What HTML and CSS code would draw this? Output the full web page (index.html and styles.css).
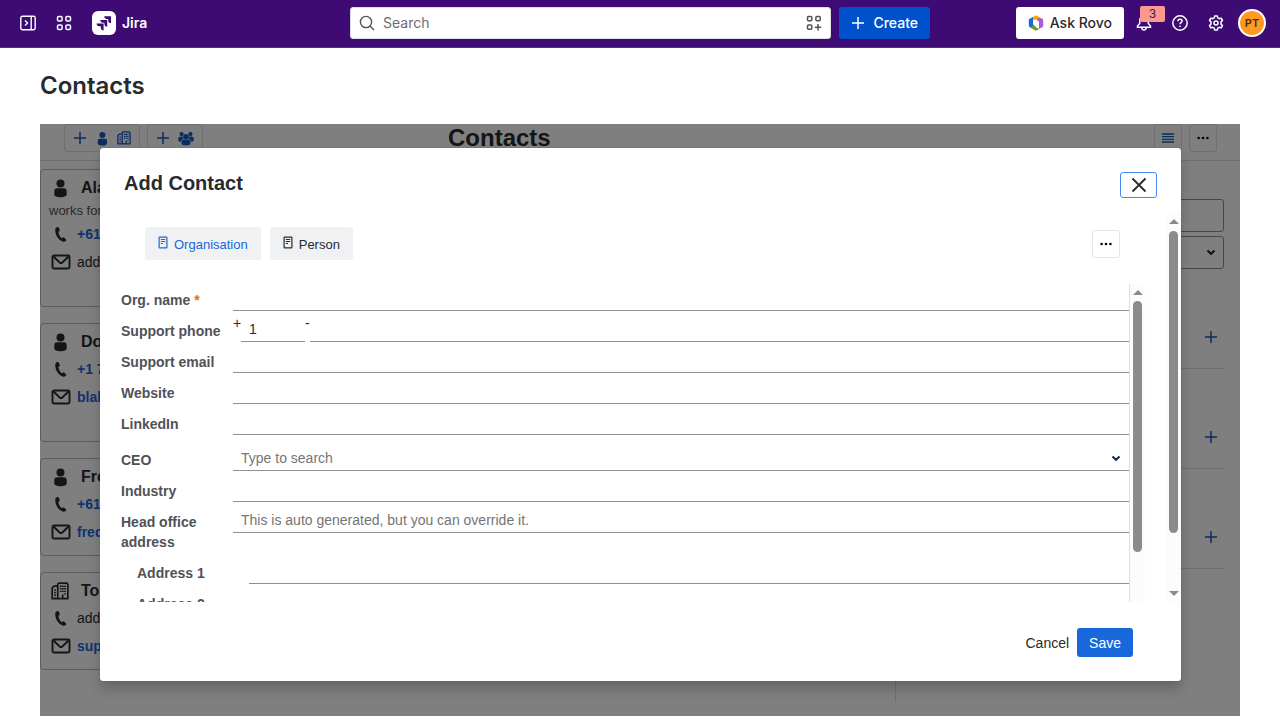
FILE: index.html
```html
<!DOCTYPE html>
<html lang="en">
<head>
<meta charset="utf-8">
<title>Contacts - Jira</title>
<link rel="stylesheet" href="styles.css">
</head>
<body>
<svg class="sprite" aria-hidden="true">
  <symbol id="plus" viewBox="0 0 14 14"><path d="M7 1v12M1 7h12" fill="none" stroke="currentColor" stroke-width="1.5"/></symbol>
  <symbol id="person" viewBox="0 0 18 20"><circle cx="9.500" cy="5.400" r="4"/><path d="M3.300 13.300C3.300 11.200 4.400 10.200 6 10.200h7c1.600 0 2.700 1 2.700 3.100v3.200c0 1.700-2.700 2.700-6.200 2.700s-6.200-1-6.200-2.700z"/></symbol>
  <symbol id="building" viewBox="0 0 20 20"><g fill="none" stroke="currentColor" stroke-width="1.900"><path d="M7.500 18.500V3c0-1 .6-1.700 1.600-1.700h8c1 0 1.600.7 1.600 1.700v15.500zM7.500 4.500H3.500L1.300 6.500v12h6.200M13 18v-4"/><path d="M10.800 4v8M13.200 4v8M15.600 4v11M4.500 8v9" stroke-dasharray="1.600 1.200"/></g></symbol>
  <symbol id="group" viewBox="0 0 18 16"><circle cx="9" cy="6" r="3.200"/><circle cx="4" cy="3" r="2.400"/><circle cx="14" cy="3" r="2.400"/><path d="M4 12c0-2 1.200-2.500 2.600-2.500h4.800c1.400 0 2.600.5 2.600 2.500v1.500C14 15 12 15.700 9 15.700S4 15 4 13.500zM.3 8.500C.3 6.500 1.700 5.700 3.200 5.700h2C5.200 7 5.500 8 6.200 8.800 4.500 8.900 3.400 9.900 3.200 12 1.200 11.600.3 11 .3 9.800zM17.700 8.500c0-2-1.400-2.800-2.900-2.800h-2c0 1.300-.3 2.300-1 3.100 1.700.1 2.800 1.100 3 3.200 2-.4 2.900-1 2.900-2.200z"/></symbol>
  <symbol id="phone" viewBox="0 0 14 18"><path d="M2.200 1.600C3 1 4 .9 4.500 1.600l1.100 2.300c.3.700.1 1.300-.5 1.700l-.9.7c.5 2.600 1.600 4.900 3.500 6.600l1.200-.6c.6-.4 1.200-.3 1.700.2l1.700 1.700c.5.600.3 1.200-.3 1.700-1.300 1-2.800 1-4.400.1C3.900 13.900.9 9.200.9 4.400c0-1.200.4-2.200 1.300-2.800z"/></symbol>
  <symbol id="mail" viewBox="0 0 20 16"><g fill="none" stroke="currentColor" stroke-width="1.900"><rect x="1.500" y="1.500" width="17" height="13" rx="1.500"/><path d="M2.500 2.500l6.200 6c.8.700 1.800.7 2.600 0l6.200-6"/></g></symbol>
  <symbol id="dots" viewBox="0 0 12 4"><circle cx="1.600" cy="2" r="1.300"/><circle cx="6" cy="2" r="1.300"/><circle cx="10.400" cy="2" r="1.300"/></symbol>
  <symbol id="doc" viewBox="0 0 10 13"><g fill="none" stroke="currentColor" stroke-width="1.200"><rect x="1.100" y="1.100" width="7.800" height="10.800" rx=".6"/><path d="M2.800 3.500h4.400M2.800 5.500h4.400M2.800 7.500h2.200"/></g></symbol>
  <symbol id="chevron" viewBox="0 0 10 7"><path d="M1.500 1.500L5 4.700l3.500-3.200" fill="none" stroke="currentColor" stroke-width="2.200"/></symbol>
</svg>

<header class="topbar">
  <nav class="topbar-start" aria-label="Navigation">
    <button class="icon-button" aria-label="Expand sidebar"><svg width="16" height="16" viewBox="0 0 16 16" fill="none" stroke="currentColor" stroke-width="1.400"><rect x=".8" y="1.300" width="14.400" height="13.400" rx="1.600"/><path d="M11.200 1.500v13M5 5.500L7.500 8 5 10.500"/></svg></button>
    <button class="icon-button" aria-label="Switch apps"><svg width="16" height="16" viewBox="0 0 16 16" fill="none" stroke="currentColor" stroke-width="1.500"><rect x="1.500" y="1.500" width="4.600" height="4.600" rx="1.300"/><rect x="9.900" y="1.500" width="4.600" height="4.600" rx="1.300"/><rect x="1.500" y="9.900" width="4.600" height="4.600" rx="1.300"/><rect x="9.900" y="9.900" width="4.600" height="4.600" rx="1.300"/></svg></button>
    <a class="brand" href="#"><svg width="24" height="24" viewBox="0 0 24 24"><rect width="24" height="24" rx="6" fill="#fff"/><path fill="#3d0b73" d="M12.200 5.300H19v6.800c-1.600 0-2.800-1.200-2.800-2.700V8.100h-1.300c-1.500 0-2.700-1.200-2.700-2.800zM8.300 8.900h6.900v6.800c-1.600 0-2.800-1.200-2.800-2.700v-1.300H11c-1.500 0-2.700-1.200-2.700-2.800zM4.500 12.400h7.100v7c-1.600 0-2.800-1.200-2.800-2.700v-1.500H7.200c-1.500 0-2.700-1.200-2.700-2.800z"/></svg>Jira</a>
  </nav>
  <div class="topbar-middle">
    <label class="search">
      <svg width="16" height="16" viewBox="0 0 16 16" fill="none" stroke="currentColor" stroke-width="1.400"><circle cx="7" cy="7" r="5.600"/><path d="M11 11l4 4"/></svg>
      <input type="search" placeholder="Search" aria-label="Search">
      <svg width="16" height="16" viewBox="0 0 16 16" fill="none" stroke="currentColor" stroke-width="1.500"><rect x="1.500" y="1.500" width="4.300" height="4.300" rx="1"/><rect x="9.900" y="1.500" width="4.300" height="4.300" rx="1"/><rect x="1.500" y="9.900" width="4.300" height="4.300" rx="1"/><path d="M12 9v6.400M8.800 12.200h6.400"/></svg>
    </label>
    <button class="create"><svg width="14" height="14"><use href="#plus"/></svg>Create</button>
  </div>
  <div class="topbar-end">
    <button class="rovo"><svg width="16" height="16" viewBox="0 0 16 16"><path fill="#1868db" d="M.8 5.200c0-.7.300-1.200.9-1.500L5 2v5.500c0 1.200.4 2.100 1.300 2.800L8 11.500v1.800L1.700 12.200c-.6-.3-.9-.9-.9-1.500z"/><path fill="#fca700" d="M5 2L7 .8c.6-.4 1.400-.4 2 0L14.300 3.700 11 5.500 8 4v7.500L5 8z"/><path fill="#af59e1" d="M14.300 3.700c.6.300.9.800.9 1.500v5.500c0 .7-.3 1.200-.9 1.500L11 14V8.500c0-1.200-.4-2.100-1.300-2.800L8 4.500 11 3z"/><path fill="#6a9a23" d="M11 14l-2 1.200c-.6.400-1.400.4-2 0l-5.300-3L5 10.500l3 1.700z"/><path fill="#fff" d="M8 4.500l2 1.600c.6.500.9 1.200.9 2v3.300L8 12l-2-1.600c-.6-.5-.9-1.200-.9-2V5z"/></svg>Ask Rovo</button>
    <button class="icon-button bell" aria-label="Notifications, 3 unread"><svg width="16" height="16" viewBox="0 0 16 16" fill="none" stroke="currentColor" stroke-width="1.500"><path d="M8 1.200c-2.600 0-4.300 1.900-4.300 4.300v3L1.500 11v1.200h13V11l-2.200-2.500v-3C12.300 3.100 10.600 1.200 8 1.200zM5.600 12.500c.2 1.500 1.100 2.500 2.400 2.500s2.200-1 2.400-2.500"/></svg><span class="badge">3</span></button>
    <button class="icon-button" aria-label="Help"><svg width="16" height="16" viewBox="0 0 16 16" fill="none" stroke="currentColor" stroke-width="1.500"><circle cx="8" cy="8" r="7.200"/><path d="M5.900 6.300c0-1.300.9-2.100 2.100-2.100s2.100.8 2.100 1.900c0 1.500-2.100 1.600-2.100 3.100"/><circle cx="8" cy="11.300" r=".5" fill="currentColor" stroke-width=".8"/></svg></button>
    <button class="icon-button" aria-label="Settings"><svg width="16" height="16" viewBox="0 0 16 16" fill="none" stroke="currentColor" stroke-width="1.500" stroke-linejoin="round"><path d="M6.700.9h2.600l.5 2 1.400.8 2-.6 1.300 2.300-1.500 1.500v2.200l1.500 1.500-1.300 2.300-2-.6-1.400.8-.5 2H6.700l-.5-2-1.400-.8-2 .6-1.300-2.300L3 9.100V6.900L1.500 5.400l1.300-2.300 2 .6 1.400-.8z"/><circle cx="8" cy="8" r="2"/></svg></button>
    <button class="avatar" aria-label="Your profile">PT</button>
  </div>
</header>

<main class="page">
  <h1>Contacts</h1>
  <section class="frame">
    <div class="app">
      <div class="toolbar">
        <div class="toolbar-group">
          <button class="tool" aria-label="Add contact"><svg width="14" height="14"><use href="#plus"/></svg><svg width="14" height="15"><use href="#person"/></svg><svg width="14" height="14"><use href="#building"/></svg></button>
          <button class="tool" aria-label="Add group"><svg width="14" height="14"><use href="#plus"/></svg><svg width="16" height="15"><use href="#group"/></svg></button>
        </div>
        <h2>Contacts</h2>
        <div class="toolbar-group">
          <button class="tool square" aria-label="List view"><svg width="12" height="10" viewBox="0 0 12 10"><path d="M0 1h12M0 3.700h12M0 6.300h12M0 9h12" stroke="currentColor" stroke-width="1.300"/></svg></button>
          <button class="tool square dark" aria-label="More"><svg width="12" height="4"><use href="#dots"/></svg></button>
        </div>
      </div>
      <div class="columns">
        <div class="cards">
          <article class="card tall">
            <h3><svg width="18" height="20"><use href="#person"/></svg>Alan</h3>
            <p class="works">works for</p>
            <p class="line"><svg width="14" height="17"><use href="#phone"/></svg><a href="#">+61</a></p>
            <p class="line"><svg width="20" height="16"><use href="#mail"/></svg>add</p>
          </article>
          <article class="card tall">
            <h3><svg width="18" height="20"><use href="#person"/></svg>Don</h3>
            <p class="line"><svg width="14" height="17"><use href="#phone"/></svg><a href="#">+1 7</a></p>
            <p class="line"><svg width="20" height="16"><use href="#mail"/></svg><a href="#">blah</a></p>
          </article>
          <article class="card">
            <h3><svg width="18" height="20"><use href="#person"/></svg>Fred</h3>
            <p class="line"><svg width="14" height="17"><use href="#phone"/></svg><a href="#">+61</a></p>
            <p class="line"><svg width="20" height="16"><use href="#mail"/></svg><a href="#">fred</a></p>
          </article>
          <article class="card">
            <h3><svg width="18" height="20"><use href="#building"/></svg>Tom</h3>
            <p class="line"><svg width="14" height="17"><use href="#phone"/></svg>add</p>
            <p class="line"><svg width="20" height="16"><use href="#mail"/></svg><a href="#">supp</a></p>
          </article>
        </div>
        <aside class="filters">
          <input class="filter" type="text" aria-label="Filter contacts">
          <div class="select-wrap"><select class="filter" aria-label="Filter type"><option></option></select><svg width="10" height="7"><use href="#chevron"/></svg></div>
          <div class="filter-section first"><button aria-label="Add filter"><svg width="14" height="14"><use href="#plus"/></svg></button></div>
          <div class="filter-section"><button aria-label="Add filter"><svg width="14" height="14"><use href="#plus"/></svg></button></div>
          <div class="filter-section"><button aria-label="Add filter"><svg width="14" height="14"><use href="#plus"/></svg></button></div>
        </aside>
      </div>
    </div>

    <div class="overlay">
      <div class="dialog" role="dialog" aria-labelledby="dialog-title">
        <div class="dialog-header">
          <h2 id="dialog-title">Add Contact</h2>
          <button class="close" aria-label="Close"><svg width="16" height="16" viewBox="0 0 16 16"><path d="M1.500 1.500l13 13M14.500 1.500l-13 13" stroke="currentColor" stroke-width="1.800"/></svg></button>
        </div>
        <div class="dialog-body">
          <div class="dialog-content">
            <div class="tabs">
              <button class="tab selected"><svg width="10" height="13"><use href="#doc"/></svg>Organisation</button>
              <button class="tab"><svg width="10" height="13"><use href="#doc"/></svg>Person</button>
              <button class="more" aria-label="More"><svg width="12" height="4"><use href="#dots"/></svg></button>
            </div>
            <div class="form-scroll">
              <form class="form">
                <div class="row first"><label for="org">Org. name <span class="required">*</span></label><input id="org" type="text"></div>
                <div class="row"><label for="phone-number">Support phone</label>
                  <div class="phone-field"><span>+</span><input class="code" type="text" value="1" aria-label="Country code"><span class="dash">-</span><input id="phone-number" type="tel"></div></div>
                <div class="row"><label for="email">Support email</label><input id="email" type="email"></div>
                <div class="row"><label for="site">Website</label><input id="site" type="text"></div>
                <div class="row"><label for="linkedin">LinkedIn</label><input id="linkedin" type="text"></div>
                <div class="row lookup"><label for="ceo">CEO</label><div class="lookup-field"><input id="ceo" type="text" placeholder="Type to search"><svg width="10" height="7"><use href="#chevron"/></svg></div></div>
                <div class="row"><label for="industry">Industry</label><input id="industry" type="text"></div>
                <div class="row"><label for="address">Head office address</label><input id="address" type="text" placeholder="This is auto generated, but you can override it."></div>
                <div class="row nested"><label for="address1">Address 1</label><input id="address1" type="text"></div>
                <div class="row nested"><label for="address2">Address 2</label><input id="address2" type="text"></div>
              </form>
              <div class="scrollbar inner"><i class="arrow up"></i><i class="thumb"></i></div>
            </div>
          </div>
          <div class="scrollbar outer"><i class="arrow up"></i><i class="thumb"></i><i class="arrow down"></i></div>
        </div>
        <div class="dialog-footer">
          <button class="cancel">Cancel</button>
          <button class="save">Save</button>
        </div>
      </div>
    </div>
  </section>
</main>
</body>
</html>
```
FILE: styles.css
```css
* { box-sizing: border-box; }

body {
  margin: 0;
  background: #fff;
  color: #292a2e;
  font-family: "Liberation Sans", Arial, sans-serif;
  font-size: 14px;
  line-height: 20px;
}

h1, h2, h3, p { margin: 0; }
button, input, select { font: inherit; color: inherit; margin: 0; }
button { padding: 0; border: 0; background: none; cursor: pointer; }
svg { display: block; flex: none; fill: currentColor; }
svg[fill="none"] { fill: none; }
a { color: #1868db; text-decoration: none; }
.sprite { position: absolute; width: 0; height: 0; }

/* Top navigation */
.topbar {
  display: grid;
  grid-template-columns: 1fr minmax(0, 580px) 1fr;
  align-items: center;
  height: 48px;
  padding: 0 14px 1px;
  background: #3d0b73;
  border-bottom: 1px solid #5b2f89;
  color: #fff;
  font-family: Inter, sans-serif;
}
.topbar-start, .topbar-middle, .topbar-end { display: flex; align-items: center; }
.topbar-start { gap: 12px; padding-left: 2px; }
.topbar-middle { gap: 8px; }
.topbar-end { justify-content: flex-end; gap: 12px; }
.icon-button { display: flex; align-items: center; justify-content: center; width: 24px; height: 24px; }
.brand { display: flex; align-items: center; gap: 6px; margin-left: 4px; color: #fff; font-weight: 600; }
.search {
  display: flex;
  flex: 1;
  align-items: center;
  gap: 8px;
  height: 32px;
  padding: 0 8px;
  border: 1px solid #dddee1;
  border-radius: 3px;
  background: #fff;
  color: #505258;
}
.search input { flex: 1; min-width: 0; padding: 0; border: 0; outline: 0; background: none; }
.search input::placeholder { color: #6b6e76; }
.create, .rovo { display: flex; align-items: center; gap: 8px; height: 32px; padding: 0 12px; border-radius: 3px; font-weight: 500; }
.create { background: #0052cc; }
.rovo { gap: 6px; background: #fff; color: #292a2e; margin-right: -4px; }
.bell { position: relative; }
.badge {
  position: absolute;
  top: -5px;
  left: 8px;
  width: 25px;
  height: 16px;
  border-radius: 2px;
  background: #fd9891;
  color: #292a2e;
  font-size: 12px;
  line-height: 16px;
}
.avatar {
  width: 28px;
  height: 28px;
  margin-left: -2px;
  border: 2px solid #fff;
  border-radius: 50%;
  background: #ff991f;
  color: #4c2e10;
  font-size: 11px;
  font-weight: 600;
  line-height: 24px;
}

/* Page */
.page { padding: 24px 40px 4px; }
h1 { margin-bottom: 24px; font: 600 24px/28px Inter, sans-serif; }
.frame { position: relative; overflow: hidden; height: calc(100vh - 128px); min-height: 400px; }
.app { display: flex; flex-direction: column; height: 100%; }

.toolbar {
  display: grid;
  grid-template-columns: 384px 1fr auto;
  height: 37px;
  padding: 0 23px 0 24px;
  border-bottom: 1px solid #dddee1;
}
.toolbar h2 { font-size: 24px; line-height: 27px; }
.toolbar-group { display: flex; align-items: flex-start; gap: 7px; }
.tool {
  display: flex;
  align-items: center;
  justify-content: center;
  gap: 8px;
  height: 28px;
  padding: 0 8px;
  border: 1px solid #dddee1;
  border-radius: 3px;
  color: #1558bc;
}
.tool.square { width: 28px; padding: 0; }
.tool.dark { color: #000; }

.columns { display: grid; grid-template-columns: 1fr 345px; flex: 1; }
.cards { display: flex; flex-direction: column; gap: 16px; padding: 8px 8px 0 0; }
.card { padding: 5px 8px 9px; border: 1px solid #b7b9be; border-radius: 4px; }
.card.tall { padding-bottom: 30px; }
.card h3 { display: flex; align-items: center; gap: 12px; height: 26px; padding-left: 2px; font-size: 16px; }
.works { color: #505258; font-size: 13px; line-height: 19px; }
.line { display: flex; align-items: center; height: 28px; }
.line svg { width: 24px; margin-right: 4px; }
.line a { font-weight: 700; }

.filters { margin-bottom: 14px; padding: 38px 16px 0 24px; border-left: 1px solid #dddee1; }
.filter { display: block; width: 100%; height: 33px; border: 1px solid #8c8f97; border-radius: 3px; background: #fff; appearance: none; }
.select-wrap { position: relative; margin-top: 4px; }
.select-wrap svg { position: absolute; right: 8px; top: 13px; color: #172b4d; }
.filter-section { display: flex; align-items: flex-end; justify-content: flex-end; height: 100px; padding: 0 6px 24px; border-bottom: 1px solid #dddee1; color: #1558bc; }

/* Dialog */
.overlay { position: absolute; inset: 0; padding: 24px 59px 35px 60px; background: rgba(0, 0, 0, 0.5); }
.dialog {
  display: flex;
  flex-direction: column;
  height: 100%;
  border-radius: 3px;
  background: #fff;
  box-shadow: 0 0 1px rgba(30, 31, 33, 0.4), 0 8px 12px rgba(30, 31, 33, 0.25);
}
.dialog-header { display: flex; align-items: flex-start; justify-content: space-between; height: 65px; padding: 24px 24px 0; }
.dialog-header h2 { font-size: 20px; line-height: 22px; }
.close { display: flex; align-items: center; justify-content: center; width: 37px; height: 26px; border: 1px solid #4688ec; border-radius: 3px; }

.dialog-body { display: flex; flex: 1; min-height: 0; }
.dialog-content { display: flex; flex: 1; flex-direction: column; min-width: 0; padding: 14px 21px 0; }
.tabs { display: flex; align-items: center; gap: 9px; height: 33px; padding: 0 25px 0 24px; }
.tab { display: flex; align-items: center; gap: 6px; height: 33px; padding: 2px 13px 0; border-radius: 3px; background: #f0f1f2; font-size: 13px; }
.tab svg { margin-bottom: 4px; }
.tab.selected { color: #1868db; }
.more { display: flex; align-items: center; justify-content: center; width: 28px; height: 28px; margin-left: auto; border: 1px solid #e4e5e8; border-radius: 3px; color: #000; }

.form-scroll { display: flex; flex: 1; min-height: 0; margin-top: 24px; overflow: hidden; }
.form { flex: 1; min-width: 0; overflow: hidden; }
.row { display: grid; grid-template-columns: 112px 1fr; min-height: 31px; }
.row label { padding: 10px 8px 1px 0; color: #505258; font-weight: 700; }
.row.first { min-height: 27px; }
.row.first label { padding-top: 6px; }
.row input { width: 100%; min-width: 0; height: 31px; padding: 5px 8px 0; border: 0; border-bottom: 1px solid #8c8f97; border-radius: 0; outline: 0; background: none; }
.row.first input { height: 27px; }
.row input::placeholder { color: #757575; opacity: 1; }
.row.lookup { min-height: 36px; }
.row.lookup label { padding-top: 15px; }
.row.lookup input { height: 36px; padding-top: 10px; }
.lookup-field { position: relative; }
.lookup-field svg { position: absolute; right: 8px; bottom: 9px; color: #172b4d; }
.row.nested { padding-left: 16px; }
.required { color: #e56910; }
.phone-field { display: flex; color: #292a2e; line-height: 24px; }
.phone-field span { width: 8px; }
.phone-field .dash { width: 5px; }
.phone-field .code { width: 64px; flex: none; }

.scrollbar { display: flex; flex: none; flex-direction: column; align-items: center; width: 15px; padding: 6px 0; background: #fcfcfc; }
.scrollbar.inner { width: 16px; border-left: 1px solid #dddee1; }
.arrow { width: 0; height: 0; border: 5px solid transparent; }
.arrow.up { border-top: 0; border-bottom-color: #8b8b8b; }
.arrow.down { border-bottom: 0; border-top-color: #8b8b8b; margin-top: auto; }
.thumb { width: 9px; height: 80%; margin-top: 7px; border-radius: 5px; background: #8b8b8b; }
.inner .thumb { height: 82%; margin-top: 6px; }

.dialog-footer { display: flex; align-items: flex-start; justify-content: flex-end; gap: 8px; height: 79px; padding: 26px 48px 0 0; }
.dialog-footer button { height: 29px; }
.save { padding: 0 12px; border-radius: 3px; background: #1868db; color: #fff; }
```
